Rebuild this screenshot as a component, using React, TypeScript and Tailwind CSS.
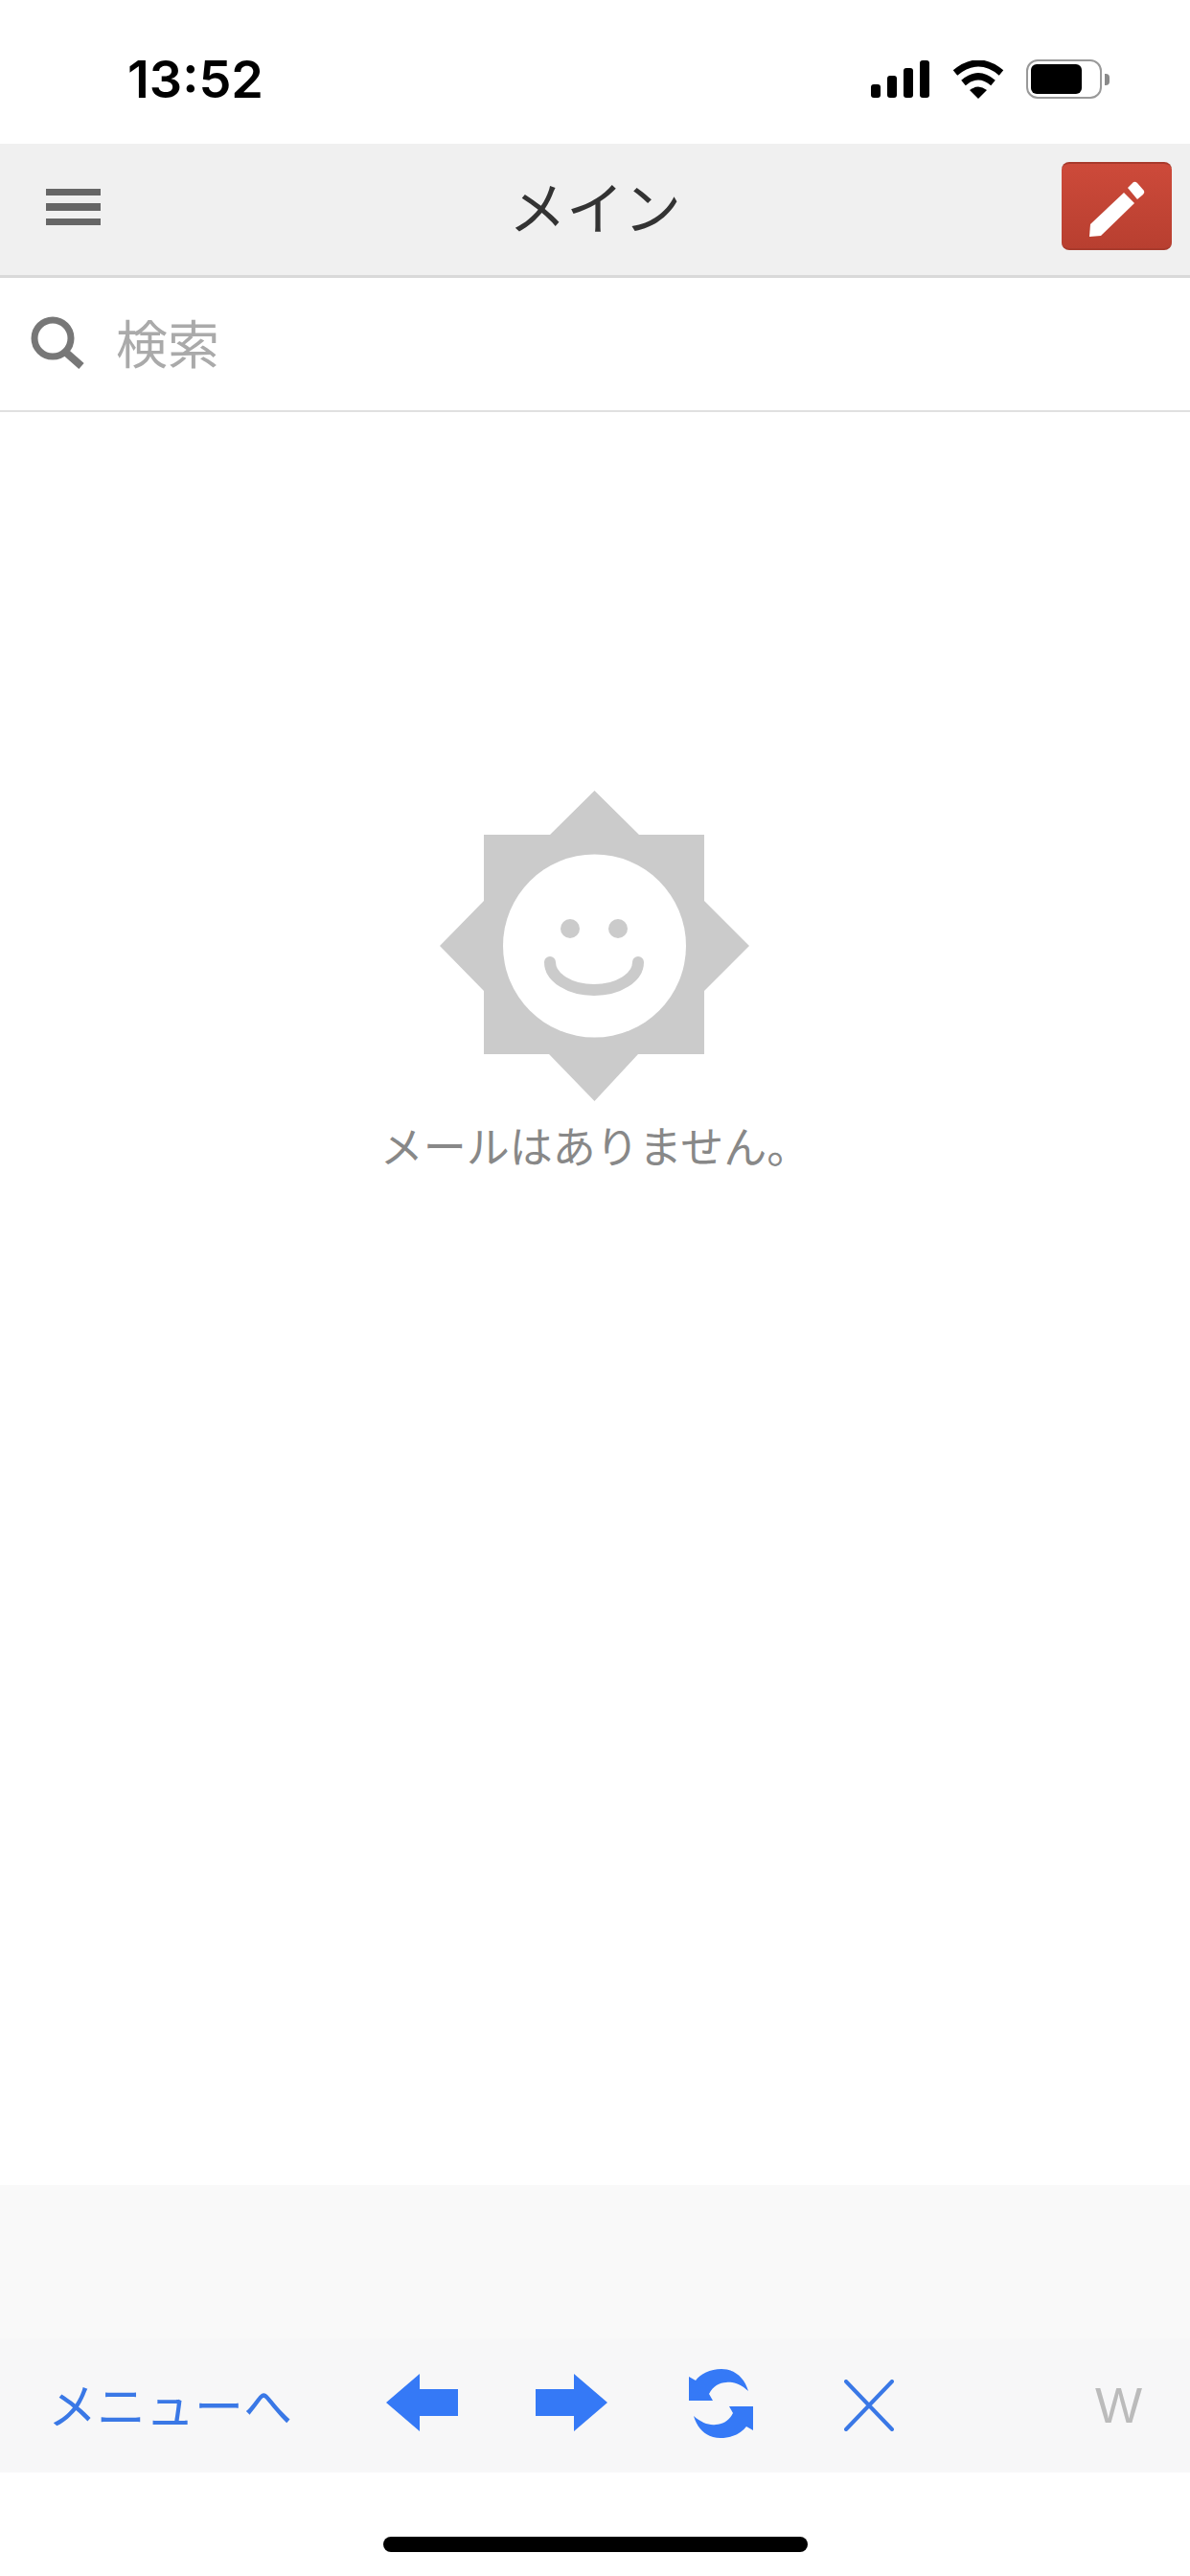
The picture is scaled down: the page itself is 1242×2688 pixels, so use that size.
const cjk = "font-['Noto_Sans_CJK_JP','Noto_Sans',sans-serif]";

function Signal() {
  return (
    <div className="flex items-end gap-[7px] h-[39px]">
      <div className="w-[10px] h-[14px] rounded-[3px] bg-black" />
      <div className="w-[10px] h-[23px] rounded-[3px] bg-black" />
      <div className="w-[10px] h-[31px] rounded-[3px] bg-black" />
      <div className="w-[10px] h-[39px] rounded-[3px] bg-black" />
    </div>
  );
}

function Wifi() {
  return (
    <svg width="54" height="40" viewBox="0 0 54 40">
      <path d="M3 13 Q27 -7 51 13" fill="none" stroke="#000" strokeWidth="7" />
      <path d="M11.500 23.500 Q27 10 42.500 23.500" fill="none" stroke="#000" strokeWidth="7" />
      <path d="M18 31 Q27 24 36 31 L27 40 Z" fill="#000" />
    </svg>
  );
}

function Battery() {
  return (
    <div className="flex items-center">
      <div className="w-[79px] h-[41px] rounded-[12px] border-[2px] border-[#999999] p-[3px]">
        <div className="w-[53px] h-full rounded-[6px] bg-black" />
      </div>
      <div className="ml-[3px] w-[5px] h-[12px] rounded-r-[4px] bg-[#8a8a8a]" />
    </div>
  );
}

function Pencil() {
  return (
    <svg width="115" height="92" viewBox="0 0 115 92">
      <path d="M30 63 L65 30 L76 41 L41 75 L29 76 Z" fill="#fff" />
      <path d="M69 25 L75 19 Q77 18 79 20 L86 28 Q87 30 85 32 L79 37 Z" fill="#fff" />
    </svg>
  );
}

function Sun() {
  return (
    <svg width="324" height="324" viewBox="0 0 324 324">
      <path
        d="M161.500 0 L208 46 L276 46 L276 115 L323 162 L276 209 L276 275 L207 275 L161.500 324 L114 275 L46 275 L46 209 L0 162 L46 115 L46 46 L115 46 Z"
        fill="#cbcbcb"
      />
      <circle cx="161.500" cy="162" r="95.500" fill="#fff" />
      <circle cx="136" cy="144" r="10" fill="#cbcbcb" />
      <circle cx="186" cy="144" r="10" fill="#cbcbcb" />
      <path
        d="M115 179 A46 29 0 0 0 207 179"
        fill="none"
        stroke="#cbcbcb"
        strokeWidth="12"
        strokeLinecap="round"
      />
    </svg>
  );
}

function Search() {
  return (
    <svg width="57" height="55" viewBox="0 0 57 55">
      <circle cx="23" cy="23" r="19" fill="none" stroke="#777777" strokeWidth="7" />
      <path d="M36 37 L53 52" fill="none" stroke="#777777" strokeWidth="8" />
    </svg>
  );
}

function Refresh() {
  const half = "M0 8 L7 12 C12 5 22 0 34 0 C48 0 58 9 62 23 C54 16 46 13 39 14 C32 14 25 18 21 26 L25 33 L0 33 Z";
  return (
    <svg width="67" height="72" viewBox="0 0 67 72">
      <path d={half} fill="#3579f6" />
      <path d={half} fill="#3579f6" transform="rotate(180 33.500 36)" />
    </svg>
  );
}

export default function App() {
  return (
    <div className={`flex h-[2688px] w-[1242px] flex-col overflow-hidden bg-white ${cjk}`}>
      <div className="flex h-[150px] items-center pt-[15px]">
        <span className="ml-[133px] font-['Inter',sans-serif] text-[54px] leading-none font-semibold text-black">
          13:52
        </span>
        <div className="ml-auto mr-[84px] flex items-center">
          <Signal />
          <div className="ml-[24px]">
            <Wifi />
          </div>
          <div className="ml-[23px]">
            <Battery />
          </div>
        </div>
      </div>

      <div className="grid h-[140px] grid-cols-[1fr_auto_1fr] items-center border-b-[3px] border-[#d9d9d9] bg-[#f0f0f0] pb-[5px]">
        <div className="ml-[48px] flex w-[57px] flex-col gap-[8px]">
          <div className="h-[7px] bg-[#666666]" />
          <div className="h-[8px] bg-[#666666]" />
          <div className="h-[7px] bg-[#666666]" />
        </div>
        <span className="mb-[5px] text-[60px] leading-none text-[#333333]">メイン</span>
        <div className="flex justify-end pr-[19px]">
          <button className="mb-[2px] h-[92px] w-[115px] rounded-[8px] border-y-[2px] border-[#a83a2c] bg-linear-to-b from-[#cd4a3a] to-[#b83f30]">
            <Pencil />
          </button>
        </div>
      </div>

      <div className="flex h-[140px] items-center border-b-[2px] border-[#e0e0e0] pb-[4px] pl-[32px]">
        <Search />
        <span className="ml-[32px] text-[54px] leading-none text-[#aaaaaa]">検索</span>
      </div>

      <div className="flex flex-1 flex-col items-center pt-[395px]">
        <Sun />
        <p className="mt-[22px] text-[45px] leading-[48px] text-[#888888]">メールはありません。</p>
      </div>

      <div className="h-[160px] bg-[#f9f9f9]" />
      <div className="flex h-[140px] items-center bg-[#f7f7f8] pl-[50px] pr-[50px]">
        <span className="mb-[4px] text-[51px] leading-none text-[#3a78e6]">メニューへ</span>
        <svg className="mb-[6px] ml-[98px]" width="75" height="60" viewBox="0 0 75 60">
          <path d="M0 30 L35 0 L35 16 L75 16 L75 44 L35 44 L35 60 Z" fill="#3579f6" />
        </svg>
        <svg className="mb-[6px] ml-[81px]" width="75" height="60" viewBox="0 0 75 60">
          <path d="M75 30 L40 0 L40 16 L0 16 L0 44 L40 44 L40 60 Z" fill="#3579f6" />
        </svg>
        <div className="mb-[4px] ml-[85px]">
          <Refresh />
        </div>
        <svg className="ml-[95px]" width="52" height="54" viewBox="0 0 52 54">
          <path d="M2 2 L50 52 M50 2 L2 52" fill="none" stroke="#3a78e6" strokeWidth="4" strokeLinecap="round" />
        </svg>
        <span className="ml-auto font-['Liberation_Sans',sans-serif] text-[52px] leading-none text-[#bbbbbb]">W</span>
      </div>

      <div className="flex h-[108px] justify-center pt-[67px]">
        <div className="h-[16px] w-[443px] rounded-full bg-black" />
      </div>
    </div>
  );
}
